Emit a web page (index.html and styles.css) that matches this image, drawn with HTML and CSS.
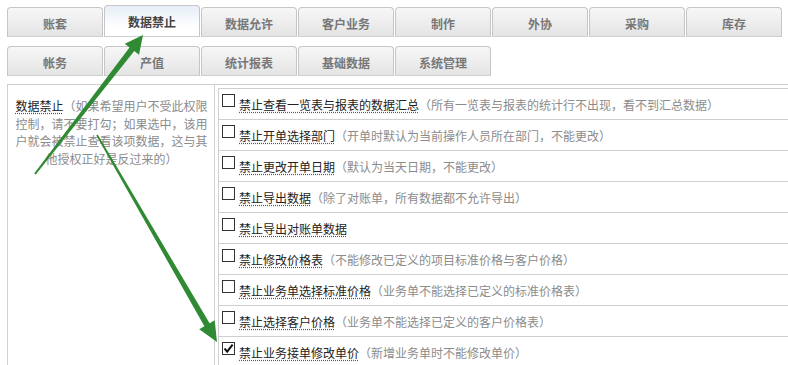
FILE: index.html
```html
<!DOCTYPE html>
<html lang="zh-CN">
<head>
  <meta charset="UTF-8">
  <meta name="viewport" content="width=device-width, initial-scale=1.0">
  <title>用户权限 - 数据禁止</title>
  <link rel="stylesheet" href="styles.css">
</head>
<body>

  <div class="page">
    <nav class="tabs">
      <a class="tab">账套</a>
      <a class="tab active">数据禁止</a>
      <a class="tab">数据允许</a>
      <a class="tab">客户业务</a>
      <a class="tab">制作</a>
      <a class="tab">外协</a>
      <a class="tab">采购</a>
      <a class="tab">库存</a>
    </nav>
    <nav class="tabs">
      <a class="tab">帐务</a>
      <a class="tab">产值</a>
      <a class="tab">统计报表</a>
      <a class="tab">基础数据</a>
      <a class="tab">系统管理</a>
    </nav>

    <div class="perm">
      <div class="perm-desc">
        <span class="perm-name">数据禁止</span><span class="hint">（如果希望用户不受此权限控制，请不要打勾；如果选中，该用户就会被禁止查看该项数据，这与其他授权正好是反过来的）</span>
      </div>
      <div class="perm-body">
        <ul class="perm-list">
          <li><span class="chk"></span><span class="perm-name">禁止查看一览表与报表的数据汇总</span><span class="hint">（所有一览表与报表的统计行不出现，看不到汇总数据）</span></li>
          <li><span class="chk"></span><span class="perm-name">禁止开单选择部门</span><span class="hint">（开单时默认为当前操作人员所在部门，不能更改）</span></li>
          <li><span class="chk"></span><span class="perm-name">禁止更改开单日期</span><span class="hint">（默认为当天日期，不能更改）</span></li>
          <li><span class="chk"></span><span class="perm-name">禁止导出数据</span><span class="hint">（除了对账单，所有数据都不允许导出）</span></li>
          <li><span class="chk"></span><span class="perm-name">禁止导出对账单数据</span></li>
          <li><span class="chk"></span><span class="perm-name">禁止修改价格表</span><span class="hint">（不能修改已定义的项目标准价格与客户价格）</span></li>
          <li><span class="chk"></span><span class="perm-name">禁止业务单选择标准价格</span><span class="hint">（业务单不能选择已定义的标准价格表）</span></li>
          <li><span class="chk"></span><span class="perm-name">禁止选择客户价格</span><span class="hint">（业务单不能选择已定义的客户价格表）</span></li>
          <li><span class="chk checked"><svg viewBox="0 0 13 13" width="13" height="13"><path d="M2.5 6.5 L5.2 9.6 L10.6 2.6" fill="none" stroke="#111" stroke-width="2"/></svg></span><span class="perm-name">禁止业务接单修改单价</span><span class="hint">（新增业务单时不能修改单价）</span></li>
        </ul>
      </div>
    </div>

    <!-- annotation arrows drawn over the screenshot -->
    <svg class="arrows" width="788" height="365" viewBox="0 0 788 365">
      <polygon points="34.2,173.4 129.5,47.4 124.8,43.7 143,35 139.0,54.7 134.3,51.0 35.8,174.6"/>
      <polygon points="97.7,134.6 209.6,323.2 214.7,320.2 217,342 199.2,329.2 204.4,326.2 96.3,135.4"/>
    </svg>
  </div>

</body>
</html>
```

FILE: styles.css
```css
* {
  box-sizing: border-box;
}
html, body {
  height: 100%;
}
body {
  margin: 0;
  overflow: hidden;
  background: #fff;
  color: #222;
  font-family: "Noto Sans CJK SC", "Noto Sans", sans-serif;
  font-size: 12px;
  text-spacing-trim: space-all;
}
.page {
  position: relative;
  padding: 5px 0 0 7px;
}

/* tabs */
.tabs {
  display: flex;
  align-items: flex-end;
  gap: 1px;
  height: 32px;
}
.tabs + .tabs {
  margin-top: 9px;
  height: 30px;
}
.tab {
  width: 96px;
  height: 30px;
  display: grid;
  place-content: center;
  border: 1px solid #c6c6c6;
  border-bottom-color: #cfcfcf;
  border-radius: 4px 4px 0 0;
  background: linear-gradient(#f7f7f7, #e4e4e4);
  color: #777;
  font-weight: bold;
  padding-top: 3px;
}
.tab.active {
  height: 32px;
  background: linear-gradient(#e6eef7, #ffffff 70%);
  color: #444;
  padding-top: 1px;
}

/* permission table */
.perm {
  display: flex;
  width: 900px;
  margin-top: 8px;
  border: 1px solid #cfcfcf;
  border-bottom: 0;
  height: 300px;
}
.perm-desc {
  width: 207px;
  flex: none;
  padding: 12px 6px 0 7px;
  border-right: 1px solid #cfcfcf;
  text-align: center;
  line-height: 17.5px;
}
.perm-name {
  color: #222;
  text-decoration: underline dotted #555;
  text-underline-offset: 2px;
}
.hint {
  color: #8c8c8c;
}
.perm-body {
  flex: 1;
  padding: 3px 0 0 3px;
}
.perm-list {
  list-style: none;
  margin: 0;
  padding: 0;
  border-top: 1px solid #cfcfcf;
  border-left: 1px solid #cfcfcf;
}
.perm-list li {
  display: flex;
  align-items: center;
  height: 31px;
  padding-left: 3px;
  border-bottom: 1px solid #cfcfcf;
  white-space: nowrap;
}
.chk {
  flex: none;
  width: 13px;
  height: 13px;
  margin: 0 4px 7px 0;
  border: 1px solid #333;
  background: #fff;
  position: relative;
}
.chk svg {
  position: absolute;
  left: -1px;
  top: -1px;
}

.arrows {
  position: absolute;
  left: 0;
  top: 0;
  pointer-events: none;
}
.arrows polygon {
  fill: #2f8a33;
}
```
